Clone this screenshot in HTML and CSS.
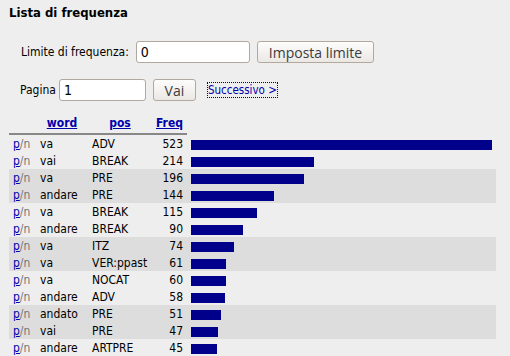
FILE: index.html
```html
<!DOCTYPE html>
<html lang="it">
<head>
    <meta charset="UTF-8">
    <title>Lista di frequenza</title>
    <link rel="stylesheet" href="styles.css">
</head>
<body>
    <h2 class="title">Lista di frequenza</h2>

    <form class="form-row limit-row">
        <label>Limite di frequenza:</label>
        <input type="text" class="field field-wide" value="0">
        <button type="button" class="btn">Imposta limite</button>
    </form>

    <form class="form-row page-row">
        <label>Pagina</label>
        <input type="text" class="field field-page" value="1">
        <button type="button" class="btn btn-small">Vai</button>
        <a href="#" class="next-link">Successivo &gt;</a>
    </form>

    <table class="freq-table">
        <thead>
            <tr>
                <th class="c-pn"></th>
                <th class="c-word"><a href="#">word</a></th>
                <th class="c-pos"><a href="#">pos</a></th>
                <th class="c-freq"><a href="#">Freq</a></th>
                <th class="c-bar"></th>
            </tr>
        </thead>
        <tbody>
            <tr><td class="c-pn"><a href="#">p</a>/n</td><td class="c-word">va</td><td class="c-pos">ADV</td><td class="c-freq">523</td><td class="c-bar"><div class="bar" style="width: 301px"></div></td></tr>
            <tr><td class="c-pn"><a href="#">p</a>/n</td><td class="c-word">vai</td><td class="c-pos">BREAK</td><td class="c-freq">214</td><td class="c-bar"><div class="bar" style="width: 123px"></div></td></tr>
            <tr class="shade"><td class="c-pn"><a href="#">p</a>/n</td><td class="c-word">va</td><td class="c-pos">PRE</td><td class="c-freq">196</td><td class="c-bar"><div class="bar" style="width: 113px"></div></td></tr>
            <tr class="shade"><td class="c-pn"><a href="#">p</a>/n</td><td class="c-word">andare</td><td class="c-pos">PRE</td><td class="c-freq">144</td><td class="c-bar"><div class="bar" style="width: 83px"></div></td></tr>
            <tr><td class="c-pn"><a href="#">p</a>/n</td><td class="c-word">va</td><td class="c-pos">BREAK</td><td class="c-freq">115</td><td class="c-bar"><div class="bar" style="width: 66px"></div></td></tr>
            <tr><td class="c-pn"><a href="#">p</a>/n</td><td class="c-word">andare</td><td class="c-pos">BREAK</td><td class="c-freq">90</td><td class="c-bar"><div class="bar" style="width: 52px"></div></td></tr>
            <tr class="shade"><td class="c-pn"><a href="#">p</a>/n</td><td class="c-word">va</td><td class="c-pos">ITZ</td><td class="c-freq">74</td><td class="c-bar"><div class="bar" style="width: 43px"></div></td></tr>
            <tr class="shade"><td class="c-pn"><a href="#">p</a>/n</td><td class="c-word">va</td><td class="c-pos">VER:ppast</td><td class="c-freq">61</td><td class="c-bar"><div class="bar" style="width: 35px"></div></td></tr>
            <tr><td class="c-pn"><a href="#">p</a>/n</td><td class="c-word">va</td><td class="c-pos">NOCAT</td><td class="c-freq">60</td><td class="c-bar"><div class="bar" style="width: 35px"></div></td></tr>
            <tr><td class="c-pn"><a href="#">p</a>/n</td><td class="c-word">andare</td><td class="c-pos">ADV</td><td class="c-freq">58</td><td class="c-bar"><div class="bar" style="width: 34px"></div></td></tr>
            <tr class="shade"><td class="c-pn"><a href="#">p</a>/n</td><td class="c-word">andato</td><td class="c-pos">PRE</td><td class="c-freq">51</td><td class="c-bar"><div class="bar" style="width: 30px"></div></td></tr>
            <tr class="shade"><td class="c-pn"><a href="#">p</a>/n</td><td class="c-word">vai</td><td class="c-pos">PRE</td><td class="c-freq">47</td><td class="c-bar"><div class="bar" style="width: 27px"></div></td></tr>
            <tr><td class="c-pn"><a href="#">p</a>/n</td><td class="c-word">andare</td><td class="c-pos">ARTPRE</td><td class="c-freq">45</td><td class="c-bar"><div class="bar" style="width: 26px"></div></td></tr>
        </tbody>
    </table>
</body>
</html>
```

FILE: styles.css
```css
body {
    margin: 0;
    padding: 4px 9px;
    background: #eeeeee;
    color: #000;
    font-family: "DejaVu Sans Condensed", "DejaVu Sans", sans-serif;
    font-size: 12px;
}
.title {
    font-size: 13px;
    font-weight: bold;
    margin: 0 0 19px 0;
    line-height: 18px;
}
.form-row {
    display: flex;
    align-items: center;
    margin: 0;
}
.limit-row {
    padding-left: 12px;
    margin-bottom: 16px;
}
.page-row {
    padding-left: 11px;
    margin-bottom: 14px;
}
.limit-row label {
    margin-right: 7px;
}
.page-row label {
    margin-right: 3px;
}
.field {
    box-sizing: border-box;
    height: 22px;
    border: 1px solid #b3a89e;
    border-radius: 3px;
    background: #fff;
    padding: 1px 4px;
    font-family: inherit;
    font-size: 14px;
    color: #000;
}
.field-wide {
    width: 114px;
}
.field-page {
    width: 87px;
}
.btn {
    box-sizing: border-box;
    height: 22px;
    margin-left: 7px;
    padding: 0 11px;
    border: 1px solid #b3a89e;
    border-radius: 3px;
    background: linear-gradient(#fdfdfc, #ebe8e4);
    color: #3c3c3c;
    font-family: "Open Sans", "DejaVu Sans", sans-serif;
    font-size: 14px;
}
.btn-small {
    width: 43px;
    padding: 0;
}
.next-link {
    margin-left: 12px;
    color: #0000aa;
    text-decoration: none;
    outline: 1px dotted #00008b;
    font-size: 11.5px;
    line-height: 14px;
}
.freq-table {
    border-collapse: collapse;
    width: 487px;
}
.freq-table th,
.freq-table td {
    padding: 0 4px;
    height: 17px;
    text-align: left;
    white-space: nowrap;
}
.freq-table thead th {
    border-bottom: 2px solid #888;
    height: 16px;
    padding-bottom: 2px;
}
.freq-table thead th.c-bar {
    border-bottom: none;
}
.freq-table a {
    color: #0000aa;
}
.freq-table th a {
    font-weight: bold;
}
.c-pn {
    width: 19px;
    color: #777;
}
.c-word {
    width: 44px;
}
.c-pos {
    width: 56px;
}
.freq-table .c-freq {
    width: 20px;
    text-align: right;
}
.freq-table .c-bar {
    padding: 0 0 0 4px;
    vertical-align: bottom;
}
.freq-table thead .c-word,
.freq-table thead .c-pos {
    text-align: center;
}
.shade td {
    background: #dddddd;
}
.bar {
    height: 10px;
    margin-bottom: 2px;
    background: #00008b;
}
```
